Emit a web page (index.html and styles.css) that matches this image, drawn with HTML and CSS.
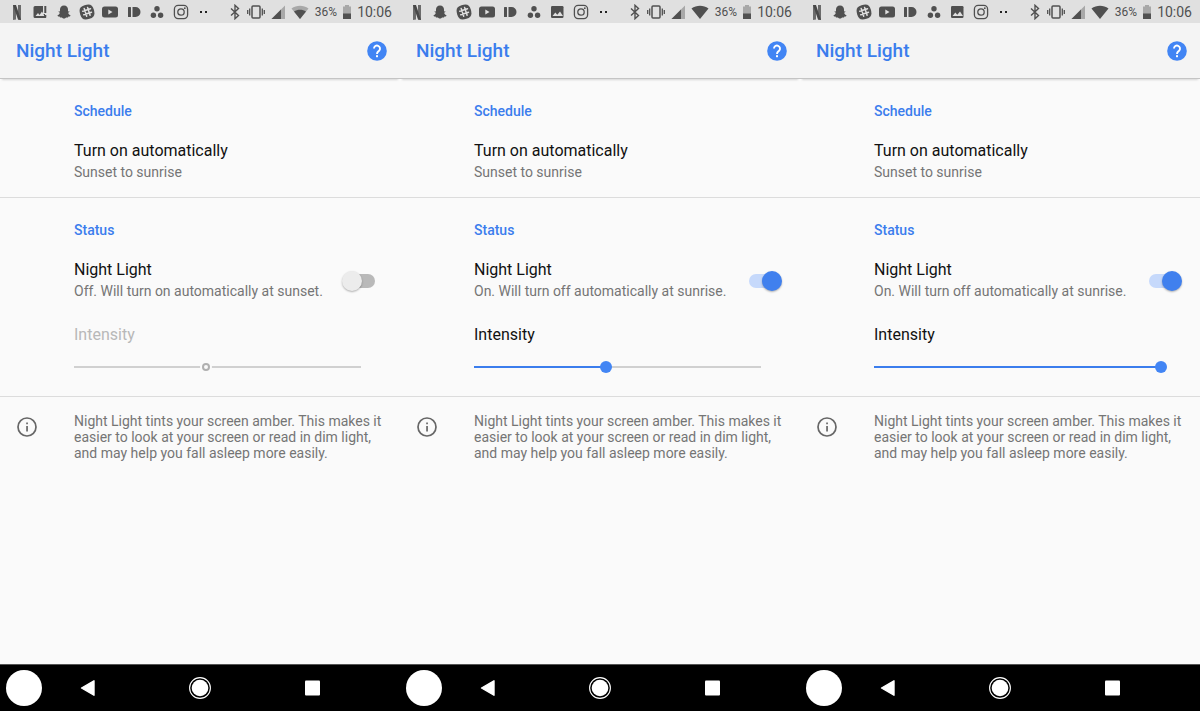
FILE: index.html
```
<!DOCTYPE html>
<html lang="en">
<head>
    <meta charset="UTF-8">
    <meta name="viewport" content="width=device-width, initial-scale=1.0">
    <title>Night Light</title>
    <link rel="stylesheet" href="styles.css">
</head>
<body>
    <!-- Shared icons -->
    <svg class="sprite" aria-hidden="true">
        <symbol id="netflix" viewBox="0 0 16 16">
            <path d="M4 1h3v14.500l-3 .5zM9 1h3v15l-3-.5z" fill="#6b6b6b"/>
            <path d="M4 1h3l5 15-3-.5z" fill="#484848"/>
        </symbol>
        <symbol id="photo-alert" viewBox="0 0 16 16">
            <path d="M3 2h8v8h2v3h1v1H3a1.500 1.500 0 0 1-1.500-1.500v-9A1.500 1.500 0 0 1 3 2z"/>
            <path d="M3.500 12l2.500-3 1.500 2L10 7.500l2.500 4.500z" fill="#e0e0e0"/>
            <path d="M12.300 2h2v7h-2zM12.300 11h2v2.500h-2z"/>
        </symbol>
        <symbol id="photo" viewBox="0 0 16 16">
            <rect x="2" y="2" width="12.500" height="12" rx="1.200"/>
            <path d="M3.500 12l2.800-3.500 2 2.300L11 7.500l3 4.500z" fill="#e0e0e0"/>
        </symbol>
        <symbol id="ghost" viewBox="0 0 16 16">
            <path d="M8 1.500c2.600 0 4 1.700 4 4v2l1.300-.2c.5.600-.4 1.100-1.200 1.500.5 1.500 1.400 2.300 2.500 2.700-.2 1-1.300 1-2.200 1.100l-.4 1c-1 0-1.900-.2-2.500.3-.8.700-2.200.700-3 0-.6-.5-1.500-.3-2.500-.3l-.4-1c-.9-.1-2-.1-2.200-1.100 1.100-.4 2-1.200 2.500-2.700-.8-.4-1.700-.9-1.200-1.500L4 7.500v-2c0-2.300 1.400-4 4-4z"/>
        </symbol>
        <symbol id="slack" viewBox="0 0 16 16">
            <path d="M5.500 1.200c5.500-1.500 7.800-.5 9.300 4.300 1.500 5.500.5 7.800-4.300 9.300-5.500 1.500-7.800.5-9.300-4.300C-.3 5 .7 2.700 5.500 1.200z"/>
            <path d="M5.200 4.500l2.500 7.700M8.600 3.500l2.500 7.700M3.800 7.300l7.700-2.500M4.800 10.800l7.700-2.500" fill="none" stroke="#e0e0e0" stroke-width="1.500" stroke-linecap="round"/>
        </symbol>
        <symbol id="youtube" viewBox="0 0 16 16">
            <rect x="0" y="2.500" width="16" height="11" rx="2.500"/>
            <path d="M6.300 5.500v5l4.200-2.500z" fill="#e0e0e0"/>
        </symbol>
        <symbol id="pushbullet" viewBox="0 0 16 16">
            <rect x="2" y="3" width="3" height="10" rx=".5"/>
            <path d="M6.500 3h3a5 5 0 0 1 0 10h-3z"/>
        </symbol>
        <symbol id="asana" viewBox="0 0 16 16">
            <circle cx="8" cy="4.700" r="2.700"/>
            <circle cx="4.400" cy="11.300" r="2.700"/>
            <circle cx="11.600" cy="11.300" r="2.700"/>
        </symbol>
        <symbol id="instagram" viewBox="0 0 16 16">
            <g fill="none" stroke="#505050" stroke-width="1.300">
                <rect x="1.400" y="1.400" width="13.200" height="13.200" rx="3.800"/>
                <circle cx="8" cy="8" r="3.200"/>
            </g>
            <circle cx="11.800" cy="4.200" r=".9"/>
        </symbol>
        <symbol id="dots" viewBox="0 0 16 16">
            <rect x="4" y="7" width="2" height="2" fill="#222"/>
            <rect x="9" y="7" width="2" height="2" fill="#222"/>
        </symbol>
        <symbol id="bluetooth" viewBox="0 0 12 16">
            <path d="M2 4.500l7.500 7L6 14.700V1.300l3.500 3.200-7.500 7" fill="none" stroke="#505050" stroke-width="1.400"/>
        </symbol>
        <symbol id="vibrate" viewBox="0 0 18 16">
            <rect x="5" y="2" width="8" height="12" rx="1" fill="none" stroke="#505050" stroke-width="1.500"/>
            <path d="M2.700 4.500v7M15.300 4.500v7M.7 6v4M17.300 6v4" stroke="#505050" stroke-width="1.300"/>
        </symbol>
        <symbol id="signal" viewBox="0 0 14 16">
            <path d="M14 1.500V15H.5z" fill="#a8a8a8"/>
            <path d="M10 5.500V15H.5z"/>
        </symbol>
        <symbol id="wifi" viewBox="0 0 18 16">
            <path d="M9 15L.5 4.500C5.500.8 12.500.8 17.500 4.500z"/>
        </symbol>
        <symbol id="wifi-weak" viewBox="0 0 18 16">
            <path d="M9 15L.5 4.500C5.500.8 12.500.8 17.500 4.500z" fill="#a8a8a8"/>
            <path d="M9 15L3 7.500c3.500-2.500 8.500-2.500 12 0z"/>
        </symbol>
        <symbol id="battery" viewBox="0 0 8 16">
            <path d="M0 2.500h2V1h4v1.500h2V10H0z" fill="#a8a8a8"/>
            <path d="M0 9.500h8V15H0z"/>
        </symbol>
        <symbol id="help" viewBox="0 0 20 20">
            <circle cx="10" cy="10" r="9.800" fill="#4285f4"/>
            <path d="M7 7.600a3 3 0 1 1 5.100 2.100C11 10.800 10 11.200 10 13" fill="none" stroke="#fff" stroke-width="1.900"/>
            <rect x="9" y="14.200" width="2" height="2" fill="#fff"/>
        </symbol>
        <symbol id="info" viewBox="0 0 20 20">
            <circle cx="10" cy="10" r="9" fill="none" stroke="#666" stroke-width="1.700"/>
            <path d="M9.200 9h1.700v5.500H9.200zM9.200 5.500h1.700v1.800H9.200z" fill="#666"/>
        </symbol>
        <symbol id="back" viewBox="0 0 24 24">
            <path d="M18 4.800v14.400L5.500 12z" fill="#fff" stroke="#fff" stroke-width="1.400" stroke-linejoin="round"/>
        </symbol>
        <symbol id="home" viewBox="0 0 24 24">
            <circle cx="12" cy="12" r="8.300" fill="#fff"/>
            <circle cx="12" cy="12" r="10.400" fill="none" stroke="#fff" stroke-width="1.100"/>
        </symbol>
        <symbol id="recent" viewBox="0 0 24 24">
            <rect x="5" y="4.500" width="15" height="15" rx="1" fill="#fff"/>
        </symbol>
    </svg>

    <div class="screens">
        <!-- Night Light off -->
        <div class="phone">
            <div class="status-bar">
                <div class="notifications">
                    <svg><use href="#netflix"/></svg>
                    <svg><use href="#photo-alert"/></svg>
                    <svg><use href="#ghost"/></svg>
                    <svg><use href="#slack"/></svg>
                    <svg><use href="#youtube"/></svg>
                    <svg><use href="#pushbullet"/></svg>
                    <svg><use href="#asana"/></svg>
                    <svg><use href="#instagram"/></svg>
                    <svg><use href="#dots"/></svg>
                </div>
                <div class="system">
                    <svg class="w12"><use href="#bluetooth"/></svg>
                    <svg class="w18"><use href="#vibrate"/></svg>
                    <svg class="w14"><use href="#signal"/></svg>
                    <svg class="w18"><use href="#wifi-weak"/></svg>
                    <span class="percent">36%</span>
                    <svg class="w8"><use href="#battery"/></svg>
                    <span class="time">10:06</span>
                </div>
            </div>
            <header class="app-bar">
                <h1>Night Light</h1>
                <button class="help" aria-label="Help"><svg><use href="#help"/></svg></button>
            </header>
            <main>
                <section>
                    <h2>Schedule</h2>
                    <div class="preference">
                        <p class="title">Turn on automatically</p>
                        <p class="summary">Sunset to sunrise</p>
                    </div>
                </section>
                <section>
                    <h2>Status</h2>
                    <div class="preference switch-row">
                        <label for="switch1">
                            <span class="title">Night Light</span>
                            <span class="summary">Off. Will turn on automatically at sunset.</span>
                        </label>
                        <input type="checkbox" class="switch" id="switch1">
                    </div>
                    <div class="intensity disabled">
                        <label class="title" for="intensity1">Intensity</label>
                        <input type="range" class="slider" id="intensity1" value="46" style="--value: 46%" disabled>
                    </div>
                </section>
                <div class="note">
                    <svg><use href="#info"/></svg>
                    <p>Night Light tints your screen amber. This makes it easier to look at your screen or read in dim light, and may help you fall asleep more easily.</p>
                </div>
            </main>
            <nav class="nav-bar">
                <span class="bubble"></span>
                <button aria-label="Back"><svg><use href="#back"/></svg></button>
                <button aria-label="Home"><svg><use href="#home"/></svg></button>
                <button aria-label="Recent apps"><svg><use href="#recent"/></svg></button>
            </nav>
        </div>

        <!-- Night Light on, medium intensity -->
        <div class="phone">
            <div class="status-bar">
                <div class="notifications">
                    <svg><use href="#netflix"/></svg>
                    <svg><use href="#ghost"/></svg>
                    <svg><use href="#slack"/></svg>
                    <svg><use href="#youtube"/></svg>
                    <svg><use href="#pushbullet"/></svg>
                    <svg><use href="#asana"/></svg>
                    <svg><use href="#photo"/></svg>
                    <svg><use href="#instagram"/></svg>
                    <svg><use href="#dots"/></svg>
                </div>
                <div class="system">
                    <svg class="w12"><use href="#bluetooth"/></svg>
                    <svg class="w18"><use href="#vibrate"/></svg>
                    <svg class="w14"><use href="#signal"/></svg>
                    <svg class="w18"><use href="#wifi"/></svg>
                    <span class="percent">36%</span>
                    <svg class="w8"><use href="#battery"/></svg>
                    <span class="time">10:06</span>
                </div>
            </div>
            <header class="app-bar">
                <h1>Night Light</h1>
                <button class="help" aria-label="Help"><svg><use href="#help"/></svg></button>
            </header>
            <main>
                <section>
                    <h2>Schedule</h2>
                    <div class="preference">
                        <p class="title">Turn on automatically</p>
                        <p class="summary">Sunset to sunrise</p>
                    </div>
                </section>
                <section>
                    <h2>Status</h2>
                    <div class="preference switch-row">
                        <label for="switch2">
                            <span class="title">Night Light</span>
                            <span class="summary">On. Will turn off automatically at sunrise.</span>
                        </label>
                        <input type="checkbox" class="switch" id="switch2" checked>
                    </div>
                    <div class="intensity">
                        <label class="title" for="intensity2">Intensity</label>
                        <input type="range" class="slider" id="intensity2" value="46" style="--value: 46%">
                    </div>
                </section>
                <div class="note">
                    <svg><use href="#info"/></svg>
                    <p>Night Light tints your screen amber. This makes it easier to look at your screen or read in dim light, and may help you fall asleep more easily.</p>
                </div>
            </main>
            <nav class="nav-bar">
                <span class="bubble"></span>
                <button aria-label="Back"><svg><use href="#back"/></svg></button>
                <button aria-label="Home"><svg><use href="#home"/></svg></button>
                <button aria-label="Recent apps"><svg><use href="#recent"/></svg></button>
            </nav>
        </div>

        <!-- Night Light on, full intensity -->
        <div class="phone">
            <div class="status-bar">
                <div class="notifications">
                    <svg><use href="#netflix"/></svg>
                    <svg><use href="#ghost"/></svg>
                    <svg><use href="#slack"/></svg>
                    <svg><use href="#youtube"/></svg>
                    <svg><use href="#pushbullet"/></svg>
                    <svg><use href="#asana"/></svg>
                    <svg><use href="#photo"/></svg>
                    <svg><use href="#instagram"/></svg>
                    <svg><use href="#dots"/></svg>
                </div>
                <div class="system">
                    <svg class="w12"><use href="#bluetooth"/></svg>
                    <svg class="w18"><use href="#vibrate"/></svg>
                    <svg class="w14"><use href="#signal"/></svg>
                    <svg class="w18"><use href="#wifi"/></svg>
                    <span class="percent">36%</span>
                    <svg class="w8"><use href="#battery"/></svg>
                    <span class="time">10:06</span>
                </div>
            </div>
            <header class="app-bar">
                <h1>Night Light</h1>
                <button class="help" aria-label="Help"><svg><use href="#help"/></svg></button>
            </header>
            <main>
                <section>
                    <h2>Schedule</h2>
                    <div class="preference">
                        <p class="title">Turn on automatically</p>
                        <p class="summary">Sunset to sunrise</p>
                    </div>
                </section>
                <section>
                    <h2>Status</h2>
                    <div class="preference switch-row">
                        <label for="switch3">
                            <span class="title">Night Light</span>
                            <span class="summary">On. Will turn off automatically at sunrise.</span>
                        </label>
                        <input type="checkbox" class="switch" id="switch3" checked>
                    </div>
                    <div class="intensity">
                        <label class="title" for="intensity3">Intensity</label>
                        <input type="range" class="slider" id="intensity3" value="100" style="--value: 100%">
                    </div>
                </section>
                <div class="note">
                    <svg><use href="#info"/></svg>
                    <p>Night Light tints your screen amber. This makes it easier to look at your screen or read in dim light, and may help you fall asleep more easily.</p>
                </div>
            </main>
            <nav class="nav-bar">
                <span class="bubble"></span>
                <button aria-label="Back"><svg><use href="#back"/></svg></button>
                <button aria-label="Home"><svg><use href="#home"/></svg></button>
                <button aria-label="Recent apps"><svg><use href="#recent"/></svg></button>
            </nav>
        </div>
    </div>
</body>
</html>
```
FILE: styles.css
```
/* Basic reset */
* {
    margin: 0;
    padding: 0;
    box-sizing: border-box;
}

body {
    font-family: Roboto, Arial, sans-serif;
    font-size: 14px;
    line-height: 20px;
    background-color: #fafafa;
    color: #757575;
}

button {
    background: none;
    border: none;
    cursor: pointer;
}

svg {
    display: block;
    flex: none;
}

.sprite {
    display: none;
}

.screens {
    display: grid;
    grid-template-columns: repeat(3, 1fr);
    min-height: 100vh;
}

.phone {
    display: flex;
    flex-direction: column;
}

/* Status bar */
.status-bar {
    display: flex;
    align-items: center;
    justify-content: space-between;
    height: 23px;
    padding: 0 8px 0 9px;
    background-color: #e0e0e0;
    color: #505050;
}

.status-bar svg {
    width: 16px;
    height: 16px;
    fill: #505050;
}

.notifications {
    display: flex;
    justify-content: space-between;
    width: 53%;
}

.system {
    display: flex;
    align-items: center;
    gap: 6px;
}

.status-bar .w8 {
    width: 8px;
}

.status-bar .w12 {
    width: 12px;
}

.status-bar .w14 {
    width: 14px;
}

.status-bar .w18 {
    width: 18px;
}

.percent {
    font-size: 12px;
}

/* App bar */
.app-bar {
    display: flex;
    align-items: center;
    justify-content: space-between;
    height: 56px;
    padding: 0 13px 0 16px;
    background-color: #f4f4f4;
    border-bottom: 1px solid #c4c4c4;
    box-shadow: 0 3px 2px -2px rgba(0, 0, 0, 0.15);
}

h1 {
    font-size: 19px;
    font-weight: 500;
    color: #3b7ded;
}

.help svg {
    width: 20px;
    height: 20px;
}

/* Settings */
main {
    flex: 1;
}

section {
    padding: 22px 18px 15px 74px;
    border-bottom: 1px solid #dcdcdc;
}

h2 {
    margin-bottom: 20px;
    font-size: 14px;
    font-weight: 500;
    color: #3b7ded;
}

.title {
    display: block;
    font-size: 16px;
    color: #111;
}

.summary {
    display: block;
    margin-top: 1px;
}

.switch-row {
    display: flex;
    align-items: center;
    justify-content: space-between;
}

/* Switch */
.switch {
    appearance: none;
    position: relative;
    flex: none;
    width: 40px;
    height: 20px;
    cursor: pointer;
}

.switch::before {
    content: "";
    position: absolute;
    inset: 3px 7px;
    border-radius: 7px;
    background-color: #b9b9b9;
}

.switch::after {
    content: "";
    position: absolute;
    left: 0;
    width: 20px;
    height: 20px;
    border-radius: 50%;
    background-color: #ececec;
    box-shadow: 0 1px 2px rgba(0, 0, 0, 0.3);
}

.switch:checked::before {
    background-color: #c6d9fb;
}

.switch:checked::after {
    left: auto;
    right: 0;
    background-color: #4080ee;
}

/* Intensity slider */
.intensity {
    margin: 24px 15px 8px -6px;
}

.intensity .title {
    margin-left: 6px;
}

.intensity.disabled .title {
    color: #b8b8b8;
}

.slider {
    appearance: none;
    display: block;
    width: 100%;
    height: 12px;
    margin-top: 16px;
    background: linear-gradient(to right, #3b7ded var(--value), #d0d0d0 var(--value)) center / calc(100% - 12px) 2px no-repeat;
    cursor: pointer;
}

.slider::-webkit-slider-thumb {
    appearance: none;
    width: 12px;
    height: 12px;
    border-radius: 50%;
    background-color: #4285f4;
}

.slider:disabled {
    background-image: linear-gradient(#d0d0d0, #d0d0d0);
}

.slider:disabled::-webkit-slider-thumb {
    width: 8px;
    height: 8px;
    border: 2px solid #b0b0b0;
    background-color: #fafafa;
    box-shadow: 0 0 0 2px #fafafa;
}

/* Footer note */
.note {
    display: flex;
    gap: 37px;
    padding: 16px 18px 16px 17px;
    line-height: 16px;
}

.note svg {
    width: 20px;
    height: 20px;
    margin-top: 4px;
}

/* Navigation bar */
.nav-bar {
    position: relative;
    display: flex;
    align-items: center;
    justify-content: center;
    gap: 88px;
    height: 47px;
    background-color: #000;
    border-top: 1px solid #555;
}

.nav-bar svg {
    width: 24px;
    height: 24px;
}

.bubble {
    position: absolute;
    left: 6px;
    width: 36px;
    height: 36px;
    border-radius: 50%;
    background-color: #fff;
}
```
